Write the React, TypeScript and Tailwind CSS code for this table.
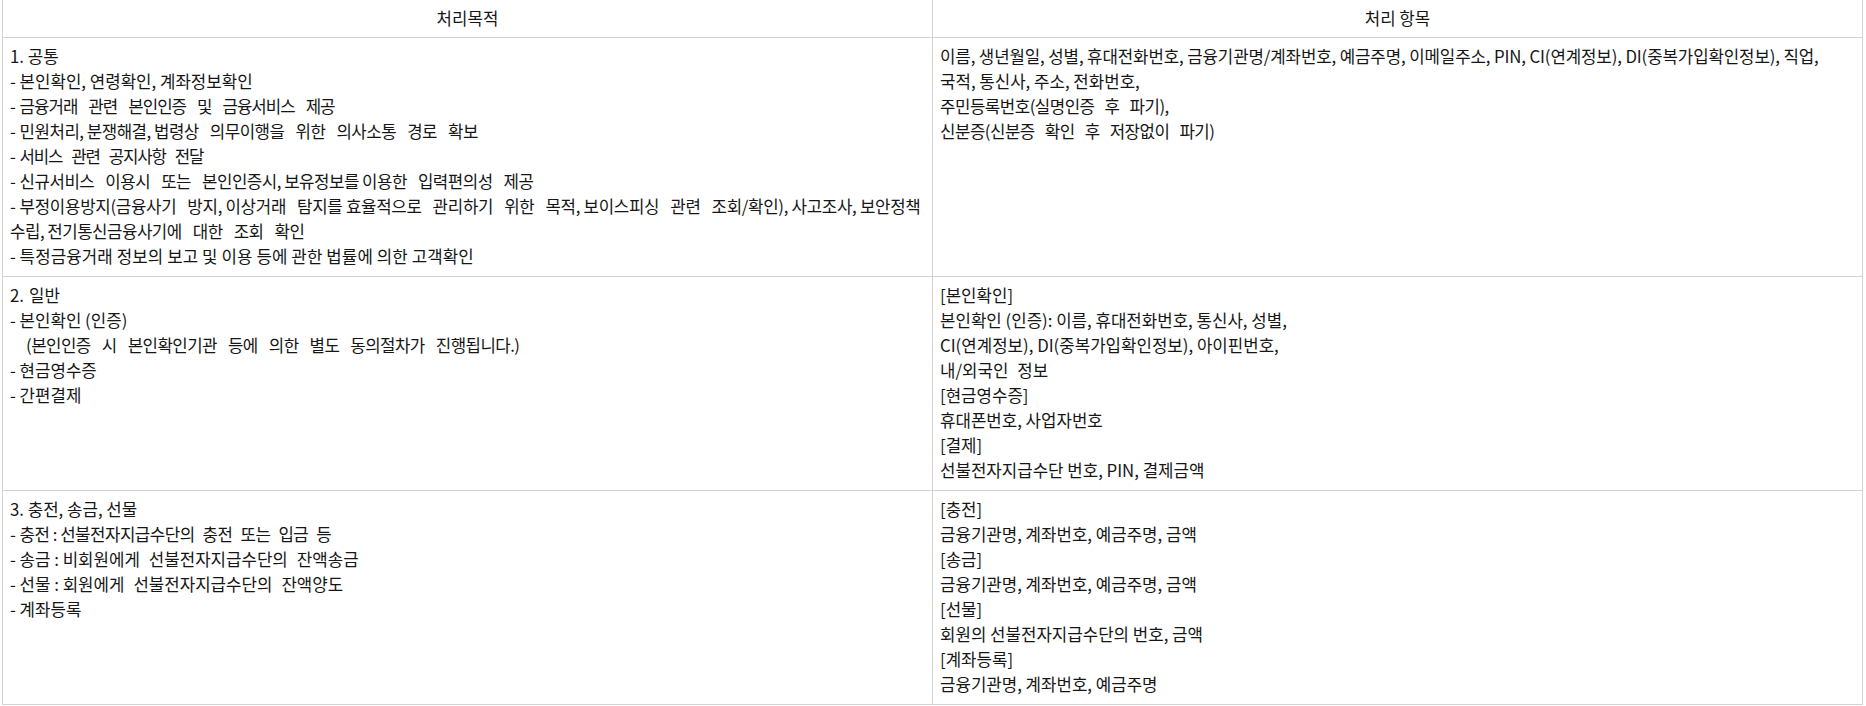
import React from "react";

type Line = { t: string; c?: string; w?: string };

function renderLine(l: Line, i: number) {
  let text = l.t;
  let prefix = "";
  if (text.startsWith("- ")) {
    prefix = "- ";
    text = text.slice(2);
  }
  const parts = text.split("_");
  const sw = "inline-block " + (l.w ?? "w-[11px]");
  return (
    <div key={i} className="whitespace-pre">
      {prefix && <span className="tracking-normal">{prefix}</span>}
      <span className={l.c ?? ""}>
        {parts.map((p, j) => (
          <React.Fragment key={j}>
            {j > 0 && <span className={sw} />}
            {p}
          </React.Fragment>
        ))}
      </span>
    </div>
  );
}

const rows: { left: Line[]; right: Line[] }[] = [
  {
    left: [
      { t: "1. 공통" },
      { t: "- 본인확인, 연령확인, 계좌정보확인" },
      { t: "- 금융거래_관련_본인인증_및_금융서비스_제공", c: "tracking-[-1px]", w: "w-[11px]" },
      { t: "- 민원처리, 분쟁해결, 법령상_의무이행을_위한_의사소통_경로_확보", c: "tracking-[-0.5px]", w: "w-[11px]" },
      { t: "- 서비스_관련_공지사항_전달", c: "tracking-[-1.2px]", w: "w-[9px]" },
      { t: "- 신규서비스_이용시_또는_본인인증시, 보유정보를 이용한_입력편의성_제공", c: "tracking-[-0.5px]", w: "w-[11px]" },
      { t: "- 부정이용방지(금융사기_방지, 이상거래_탐지를 효율적으로_관리하기_위한_목적, 보이스피싱_관련_조회/확인), 사고조사, 보안정책", c: "tracking-[-0.3px]", w: "w-[11px]" },
      { t: "수립, 전기통신금융사기에_대한_조회_확인", c: "tracking-[-0.5px]", w: "w-[11px]" },
      { t: "- 특정금융거래 정보의 보고 및 이용 등에 관한 법률에 의한 고객확인", c: "tracking-[0.1px]" },
    ],
    right: [
      { t: "이름, 생년월일, 성별, 휴대전화번호, 금융기관명/계좌번호, 예금주명, 이메일주소, PIN, CI(연계정보), DI(중복가입확인정보), 직업,", c: "tracking-[-0.12px]" },
      { t: "국적, 통신사, 주소, 전화번호," },
      { t: "주민등록번호(실명인증_후_파기),", c: "tracking-[-0.5px]", w: "w-[10px]" },
      { t: "신분증(신분증_확인_후_저장없이_파기)", c: "tracking-[-0.5px]", w: "w-[10px]" },
    ],
  },
  {
    left: [
      { t: "2._일반", w: "w-[5px]" },
      { t: "- 본인확인 (인증)" },
      { t: "     (본인인증_시_본인확인기관_등에_의한_별도_동의절차가_진행됩니다.)", c: "tracking-[-0.55px]", w: "w-[11px]" },
      { t: "- 현금영수증" },
      { t: "- 간편결제" },
    ],
    right: [
      { t: "[본인확인]" },
      { t: "본인확인 (인증): 이름, 휴대전화번호, 통신사, 성별," },
      { t: "CI(연계정보), DI(중복가입확인정보), 아이핀번호," },
      { t: "내/외국인_정보", w: "w-[9px]" },
      { t: "[현금영수증]" },
      { t: "휴대폰번호, 사업자번호" },
      { t: "[결제]" },
      { t: "선불전자지급수단 번호, PIN, 결제금액" },
    ],
  },
  {
    left: [
      { t: "3. 충전, 송금, 선물" },
      { t: "- 충전 : 선불전자지급수단의_충전_또는_입금_등", c: "tracking-[-0.5px]", w: "w-[8px]" },
      { t: "- 송금 : 비회원에게_선불전자지급수단의_잔액송금", w: "w-[9px]" },
      { t: "- 선물 : 회원에게_선불전자지급수단의_잔액양도", w: "w-[9px]" },
      { t: "- 계좌등록" },
    ],
    right: [
      { t: "[충전]" },
      { t: "금융기관명, 계좌번호, 예금주명, 금액" },
      { t: "[송금]" },
      { t: "금융기관명, 계좌번호, 예금주명, 금액" },
      { t: "[선물]" },
      { t: "회원의 선불전자지급수단의 번호, 금액" },
      { t: "[계좌등록]" },
      { t: "금융기관명, 계좌번호, 예금주명" },
    ],
  },
];

export default function App() {
  return (
    <div
      className="w-[1866px] h-[706px] bg-white pl-[2px] pr-[3px] text-[16.8px] leading-[25px] text-[#161616]"
      style={{ fontFamily: '"Noto Sans CJK KR", "Noto Sans", sans-serif' }}
    >
      <table className="w-full table-fixed border-collapse">
        <thead>
          <tr className="h-[37px]">
            <th className="border-x border-b border-[#d3d3d3] font-normal text-center align-middle">처리목적</th>
            <th className="border-x border-b border-[#d3d3d3] font-normal text-center align-middle">처리 항목</th>
          </tr>
        </thead>
        <tbody>
          {rows.map((r, i) => (
            <tr key={i}>
              <td className="border border-[#d3d3d3] align-top pl-[7px] pr-[7px] pt-[6px] pb-[7px]">
                {r.left.map(renderLine)}
              </td>
              <td className="border border-[#d3d3d3] align-top pl-[7px] pr-[7px] pt-[6px] pb-[7px]">
                {r.right.map(renderLine)}
              </td>
            </tr>
          ))}
        </tbody>
      </table>
    </div>
  );
}
